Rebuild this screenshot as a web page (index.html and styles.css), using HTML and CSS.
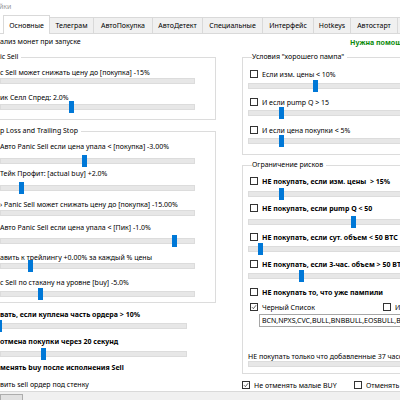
FILE: index.html
```html
<!DOCTYPE html>
<html>
<head>
<meta charset="utf-8">
<link rel="stylesheet" href="styles.css">
</head>
<body>
<div class="window">
  <div class="titlebar"><span class="title">йки</span></div>
  <div class="tabs">
    <div class="tab active w-osn">Основные</div>
    <div class="tab w-tel">Телеграм</div>
    <div class="tab w-ap">АвтоПокупка</div>
    <div class="tab w-ad">АвтоДетект</div>
    <div class="tab w-sp">Специальные</div>
    <div class="tab w-if">Интерфейс</div>
    <div class="tab w-hk">Hotkeys</div>
    <div class="tab w-as">Автостарт</div>
    <div class="tab w-as">Прочее</div>
  </div>
  <div class="page">
    <div class="col-left">
      <div class="lbl first">ализ монет при запуске</div>

      <div class="frame g1">
        <span class="legend">ic Sell</span>
        <div class="lbl">c Sell может снижать цену до [покупка] -15%</div>
        <div class="track mt0"></div>
        <div class="lbl mt9">ик Селл Спред: 2.0%</div>
        <div class="track mt1"><i class="thumb" style="left:68px"></i></div>
      </div>

      <div class="frame g2">
        <span class="legend">p Loss and Trailing Stop</span>
        <div class="lbl">Авто Panic Sell если цена упала &lt; [покупка] -3.00%</div>
        <div class="track mt6"><i class="thumb" style="left:81px"></i></div>
        <div class="lbl mt5">Тейк Профит: [actual buy] +2.0%</div>
        <div class="track mt6"><i class="thumb" style="left:18px"></i></div>
        <div class="lbl mt9">› Panic Sell может снижать цену до [покупка] -15.00%</div>
        <div class="track mt0"></div>
        <div class="lbl mt7">Авто Panic Sell если цена упала &lt; [Пик] -1.0%</div>
        <div class="track mt5"><i class="thumb" style="left:171px"></i></div>
        <div class="lbl mt9">авить к трейлингу +0.00% за каждый % цены</div>
        <div class="track mt0"><i class="thumb" style="left:27px"></i></div>
        <div class="lbl mt9">c Sell по стакану на уровне [buy] -5.0%</div>
        <div class="track mt3"><i class="thumb" style="left:37px"></i></div>
      </div>

      <div class="lbl bold mt7">вать, если куплена часть ордера &gt; 10%</div>
      <div class="track short mt3"><i class="thumb" style="left:-4px"></i></div>
      <div class="lbl bold mt8">отмена покупки через 20 секунд</div>
      <div class="track short mt4"><i class="thumb" style="left:40px"></i></div>
      <div class="lbl bold mt6">менять buy после исполнения Sell</div>
      <div class="lbl mt7">вить sell ордер под стенку</div>
    </div>

    <div class="col-right">
      <div class="help">Нужна помощь?</div>

      <div class="frame r1">
        <span class="legend">Условия "хорошего пампа"</span>
        <div class="cbrow"><span class="cb"></span>Если изм. цены &lt; 10%</div>
        <div class="track mt4"><i class="thumb" style="left:64px"></i></div>
        <div class="cbrow mt8"><span class="cb"></span>И если pump Q &gt; 15</div>
        <div class="track mt3"><i class="thumb" style="left:30px"></i></div>
        <div class="cbrow mt9"><span class="cb"></span>И если цена покупки &lt; 5%</div>
        <div class="track mt3"><i class="thumb" style="left:30px"></i></div>
      </div>

      <div class="frame r2">
        <span class="legend">Ограничение рисков</span>
        <div class="cbrow bold"><span class="cb"></span>НЕ покупать, если изм. цены &nbsp;&gt; 15%</div>
        <div class="track mt5"><i class="thumb" style="left:30px"></i></div>
        <div class="cbrow bold mt6"><span class="cb"></span>НЕ покупать, если pump Q &lt; 50</div>
        <div class="track mt6"><i class="thumb" style="left:102px"></i></div>
        <div class="cbrow bold mt7"><span class="cb"></span>НЕ покупать, если сут. объем &lt; 50 BTC</div>
        <div class="track mt4"><i class="thumb" style="left:9px"></i></div>
        <div class="cbrow bold mt7"><span class="cb"></span>НЕ покупать, если 3-час. объем &gt; 50 BTC</div>
        <div class="track mt4"><i class="thumb" style="left:50px"></i></div>
        <div class="cbrow bold mt8"><span class="cb"></span>НЕ покупать то, что уже пампили</div>
        <div class="cbrow mt5">
          <span class="cb checked"><svg viewBox="0 0 8 8"><path d="M1.2 4.2 L3.2 6.2 L6.8 1.6"/></svg></span><span class="opt-black">Черный Список</span>
          <span class="cb"></span>Игнор
        </div>
        <div class="textbox">BCN,NPXS,CVC,BULL,BNBBULL,EOSBULL,BNBBEAR</div>
        <div class="lbl lastlbl">НЕ покупать только что добавленные 37 часов</div>
        <div class="track mtm1"></div>
      </div>

      <div class="cbrow bottomrow">
        <span class="cb checked"><svg viewBox="0 0 8 8"><path d="M1.2 4.2 L3.2 6.2 L6.8 1.6"/></svg></span><span class="opt-small">Не отменять малые BUY</span>
        <span class="cb"></span>Отменять все
      </div>
    </div>
  </div>
  <div class="footer"><span class="btn"></span></div>
</div>
</body>
</html>
```

FILE: styles.css
```css
* { box-sizing: border-box; }
html, body { margin: 0; padding: 0; }
body {
  width: 400px;
  height: 400px;
  overflow: hidden;
  background: #fff;
  font-family: "Noto Sans", "DejaVu Sans", sans-serif;
  font-size: 7px;
  color: #000;
}
.window { width: 560px; }

.titlebar { height: 17px; background: #fff; color: #9a9a9a; line-height: 14px; }
.title { display: block; margin-left: -1px; }

.tabs {
  display: flex;
  align-items: flex-end;
  height: 16px;
  padding-left: 3px;
  position: relative;
  z-index: 1;
}
.tab {
  flex: none;
  height: 16px;
  border: 1px solid #d9d9d9;
  border-bottom: none;
  margin-left: -1px;
  background: #f0f0f0;
  text-align: center;
  line-height: 15px;
  white-space: nowrap;
}
.tab.active {
  height: 19px;
  margin-left: 0;
  margin-bottom: -1px;
  background: #fff;
  line-height: 19px;
  position: relative;
  z-index: 2;
}
.w-osn { width: 47px; }
.w-tel { width: 45px; }
.w-ap { width: 60px; }
.w-ad { width: 51px; }
.w-sp { width: 61px; }
.w-if { width: 52px; }
.w-hk { width: 38px; }
.w-as { width: 48px; }

.page {
  display: flex;
  height: 359px;
  border-top: 1px solid #d9d9d9;
  border-bottom: 1px solid #d9d9d9;
}

.col-left {
  flex: none;
  width: 226px;
  margin-left: -10px;
  padding-left: 10px;
}
.col-right {
  flex: none;
  width: 220px;
  margin-left: 26px;
}

.lbl {
  height: 10px;
  line-height: 10px;
  white-space: nowrap;
}
.lbl.first { margin-top: 3px; }
.bold { font-weight: 700; }

.frame {
  position: relative;
  border: 1px solid #dcdcdc;
}
.legend {
  position: absolute;
  top: -6px;
  left: 9px;
  height: 10px;
  line-height: 10px;
  padding-right: 3px;
  background: #fff;
  white-space: nowrap;
}
.col-left .frame {
  margin-left: -10px;
  padding: 10px 20px 0 9px;
}
.g1 { margin-top: 10px; padding-bottom: 9px !important; }
.g2 { margin-top: 11px; padding-bottom: 5px !important; }

.track {
  position: relative;
  height: 6px;
  background: #e7e7e7;
  border: 1px solid #dcdcdc;
}
.track.short { width: 187px; }
.thumb {
  position: absolute;
  top: -4px;
  width: 5px;
  height: 12px;
  background: #0078d7;
}

.mt0 { margin-top: 0; }
.mt1 { margin-top: 1px; }
.mt3 { margin-top: 3px; }
.mt4 { margin-top: 4px; }
.mt5 { margin-top: 5px; }
.mt6 { margin-top: 6px; }
.mt7 { margin-top: 7px; }
.mt8 { margin-top: 8px; }
.mt9 { margin-top: 9px; }
.mtm1 { margin-top: -1px; }

.help {
  height: 10px;
  line-height: 10px;
  margin-top: 4px;
  padding-left: 108px;
  color: #0a8a0a;
  font-weight: 700;
  white-space: nowrap;
}

.col-right .frame { padding-left: 5px; }
.col-right .legend { left: 9px; }
.r1 { margin-top: 9px; padding-top: 11px; padding-bottom: 10px; }
.r2 { margin-top: 10px; padding-top: 10px; padding-bottom: 6px; }

.cbrow {
  display: flex;
  align-items: center;
  height: 10px;
  white-space: nowrap;
}
.col-right .frame .cbrow { padding-left: 2px; }
.cb {
  flex: none;
  display: inline-block;
  width: 8px;
  height: 8px;
  margin-right: 4px;
  border: 1px solid #333;
  background: #fff;
}
.cb svg { display: block; width: 6px; height: 6px; }
.cb path { fill: none; stroke: #333; stroke-width: 1; }
.opt-black { flex: none; width: 121px; }
.opt-small { flex: none; width: 100px; }

.textbox {
  height: 13px;
  margin-top: 2px;
  margin-left: 11px;
  border: 1px solid #a6a6a6;
  padding-left: 2px;
  line-height: 11px;
  white-space: nowrap;
  overflow: hidden;
}
.lastlbl { margin-top: 25px; }

.bottomrow { margin-top: 6px; }

.footer {
  height: 20px;
  background: #f0f0f0;
  padding-top: 2px;
}
.btn {
  display: block;
  width: 23px;
  height: 16px;
  border: 1px solid #adadad;
  background: #e1e1e1;
}
```
